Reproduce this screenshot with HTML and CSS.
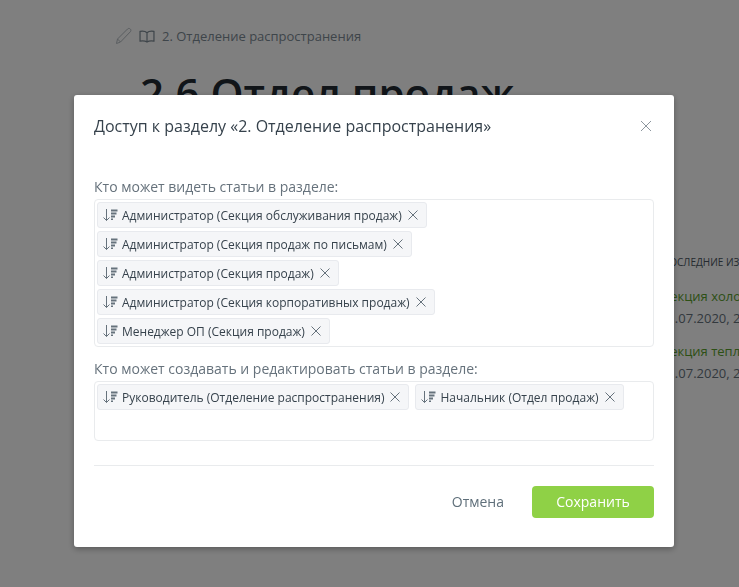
FILE: index.html
```html
<!DOCTYPE html>
<html lang="en">
<head>
    <meta charset="UTF-8">
    <title>Доступ к разделу</title>
    <link rel="stylesheet" href="styles.css">
</head>
<body>
    <div class="page">
        <main class="article">
            <div class="crumbs">
                <svg class="pencil" width="18" height="18" viewBox="0 0 18 18"><path d="M1.500 16.500l1-4.500L12.500 2c.8-.8 2-.8 2.800 0s.8 2 0 2.800L5.500 15z M2.500 12l3 3" fill="none" stroke="currentColor"/></svg>
                <svg class="book" width="16" height="13" viewBox="0 0 17 14"><path d="M8.500 3C7 1.500 4 1 1 1.500V12c3-.5 6 0 7.500 1 1.500-1 4.500-1.500 7.500-1V1.500C13 1 10 1.500 8.500 3zM8.500 3v10" fill="none" stroke="currentColor" stroke-width="1.300"/></svg>
                <span>2. Отделение распространения</span>
            </div>
            <h1>2.6 Отдел продаж</h1>
        </main>
        <aside class="recent">
            <div class="recent-title">ПОСЛЕДНИЕ ИЗМЕНЕНИЯ</div>
            <div class="recent-item">
                <div class="recent-link">Секция холодных продаж</div>
                <div class="recent-date">01.07.2020, 20:15</div>
            </div>
            <div class="recent-item">
                <div class="recent-link">Секция теплых продаж</div>
                <div class="recent-date">01.07.2020, 20:10</div>
            </div>
        </aside>
    </div>

    <div class="overlay">
        <div class="modal">
            <div class="modal-head">
                <h2>Доступ к разделу «2. Отделение распространения»</h2>
                <svg class="close" width="12" height="12" viewBox="0 0 12 12"><path d="M1 1l10 10M11 1L1 11" stroke="currentColor" fill="none"/></svg>
            </div>

            <div class="field">
                <label>Кто может видеть статьи в разделе:</label>
                <div class="tags tags-view">
                    <div class="tag"><svg class="sort" width="16" height="14" viewBox="0 0 16 14"><path d="M4.500 1v11.500M1.500 9.500l3 3 3-3" fill="none" stroke="currentColor"/><path d="M9 1.500h6.500v2H9zM9 4.500h5.500v2H9zM9 7.500h4v2H9zM9 10.500h2V12H9z" fill="currentColor"/></svg><span>Администратор (Секция обслуживания продаж)</span><svg class="remove" width="10" height="10" viewBox="0 0 10 10"><path d="M.5.500l9 9M9.500.500l-9 9" stroke="currentColor" fill="none"/></svg></div>
                    <div class="tag"><svg class="sort" width="16" height="14" viewBox="0 0 16 14"><path d="M4.500 1v11.500M1.500 9.500l3 3 3-3" fill="none" stroke="currentColor"/><path d="M9 1.500h6.500v2H9zM9 4.500h5.500v2H9zM9 7.500h4v2H9zM9 10.500h2V12H9z" fill="currentColor"/></svg><span>Администратор (Секция продаж по письмам)</span><svg class="remove" width="10" height="10" viewBox="0 0 10 10"><path d="M.5.500l9 9M9.500.500l-9 9" stroke="currentColor" fill="none"/></svg></div>
                    <div class="tag"><svg class="sort" width="16" height="14" viewBox="0 0 16 14"><path d="M4.500 1v11.500M1.500 9.500l3 3 3-3" fill="none" stroke="currentColor"/><path d="M9 1.500h6.500v2H9zM9 4.500h5.500v2H9zM9 7.500h4v2H9zM9 10.500h2V12H9z" fill="currentColor"/></svg><span>Администратор (Секция продаж)</span><svg class="remove" width="10" height="10" viewBox="0 0 10 10"><path d="M.5.500l9 9M9.500.500l-9 9" stroke="currentColor" fill="none"/></svg></div>
                    <div class="tag"><svg class="sort" width="16" height="14" viewBox="0 0 16 14"><path d="M4.500 1v11.500M1.500 9.500l3 3 3-3" fill="none" stroke="currentColor"/><path d="M9 1.500h6.500v2H9zM9 4.500h5.500v2H9zM9 7.500h4v2H9zM9 10.500h2V12H9z" fill="currentColor"/></svg><span>Администратор (Секция корпоративных продаж)</span><svg class="remove" width="10" height="10" viewBox="0 0 10 10"><path d="M.5.500l9 9M9.500.500l-9 9" stroke="currentColor" fill="none"/></svg></div>
                    <div class="tag"><svg class="sort" width="16" height="14" viewBox="0 0 16 14"><path d="M4.500 1v11.500M1.500 9.500l3 3 3-3" fill="none" stroke="currentColor"/><path d="M9 1.500h6.500v2H9zM9 4.500h5.500v2H9zM9 7.500h4v2H9zM9 10.500h2V12H9z" fill="currentColor"/></svg><span>Менеджер ОП (Секция продаж)</span><svg class="remove" width="10" height="10" viewBox="0 0 10 10"><path d="M.5.500l9 9M9.500.500l-9 9" stroke="currentColor" fill="none"/></svg></div>
                </div>
            </div>

            <div class="field">
                <label>Кто может создавать и редактировать статьи в разделе:</label>
                <div class="tags tags-edit">
                    <div class="tag"><svg class="sort" width="16" height="14" viewBox="0 0 16 14"><path d="M4.500 1v11.500M1.500 9.500l3 3 3-3" fill="none" stroke="currentColor"/><path d="M9 1.500h6.500v2H9zM9 4.500h5.500v2H9zM9 7.500h4v2H9zM9 10.500h2V12H9z" fill="currentColor"/></svg><span>Руководитель (Отделение распространения)</span><svg class="remove" width="10" height="10" viewBox="0 0 10 10"><path d="M.5.500l9 9M9.500.500l-9 9" stroke="currentColor" fill="none"/></svg></div>
                    <div class="tag"><svg class="sort" width="16" height="14" viewBox="0 0 16 14"><path d="M4.500 1v11.500M1.500 9.500l3 3 3-3" fill="none" stroke="currentColor"/><path d="M9 1.500h6.500v2H9zM9 4.500h5.500v2H9zM9 7.500h4v2H9zM9 10.500h2V12H9z" fill="currentColor"/></svg><span>Начальник (Отдел продаж)</span><svg class="remove" width="10" height="10" viewBox="0 0 10 10"><path d="M.5.500l9 9M9.500.500l-9 9" stroke="currentColor" fill="none"/></svg></div>
                </div>
            </div>

            <div class="modal-foot">
                <button class="btn-cancel" type="button">Отмена</button>
                <button class="btn-save" type="button">Сохранить</button>
            </div>
        </div>
    </div>
</body>
</html>
```

FILE: styles.css
```css
html, body {
    height: 100%;
}
body {
    margin: 0;
    overflow: hidden;
    background-color: #fff;
    font-family: "Open Sans", "Noto Sans", sans-serif;
    color: #2f3b45;
}
.page {
    display: flex;
    height: 100%;
    box-sizing: border-box;
    padding-top: 26px;
}
.article {
    width: 660px;
    flex: none;
    box-sizing: border-box;
    padding-left: 115px;
}
.crumbs {
    display: flex;
    align-items: center;
    gap: 6px;
    height: 20px;
    font-size: 13px;
    color: #7d8a94;
}
.pencil {
    color: #b4bbc1;
}
.book {
    color: #7d8a94;
    margin-right: 1px;
}
h1 {
    margin: 20px 0 0 25px;
    font-size: 42px;
    line-height: 54px;
    font-weight: 600;
    white-space: nowrap;
    color: #222b33;
}
.recent {
    flex: none;
    width: 200px;
    padding-top: 227px;
    white-space: nowrap;
}
.recent-title {
    font-size: 10px;
    line-height: 18px;
    color: #4a5560;
    margin-left: 2px;
    margin-bottom: 14px;
}
.recent-item {
    font-size: 13px;
    line-height: 22px;
    padding-bottom: 5px;
    margin-bottom: 6px;
}
.recent-item:first-of-type {
    border-bottom: 1px solid #e4e6e8;
}
.recent-link {
    color: #5aa02c;
    padding-left: 2px;
}
.recent-date {
    color: #66727c;
}

.overlay {
    position: fixed;
    top: 0;
    left: 0;
    right: 0;
    bottom: 0;
    background: rgba(0,0,0,0.5);
}
.modal {
    width: 600px;
    height: 452px;
    box-sizing: border-box;
    margin: 95px 0 0 74px;
    padding: 0 20px;
    background: #fff;
    border-radius: 3px;
    box-shadow: 0 2px 6px rgba(0,0,0,0.3);
}
.modal-head {
    display: flex;
    align-items: center;
    justify-content: space-between;
    height: 62px;
    margin-bottom: 20px;
}
h2 {
    margin: 0;
    font-size: 16px;
    font-weight: 400;
    color: #36424c;
}
.close {
    color: #8d979f;
    margin-right: 2px;
}
.field {
    margin-bottom: 12px;
}
label {
    display: block;
    font-size: 14px;
    line-height: 20px;
    color: #66727c;
    margin-bottom: 2px;
}
.tags {
    display: flex;
    flex-wrap: wrap;
    align-content: flex-start;
    align-items: flex-start;
    gap: 3px 6px;
    box-sizing: border-box;
    padding: 2px;
    border: 1px solid #e9ebed;
    border-radius: 4px;
}
.tags-view {
    height: 148px;
}
.tags-edit {
    height: 60px;
}
.tag {
    display: flex;
    align-items: center;
    height: 26px;
    box-sizing: border-box;
    padding: 0 8px 0 4px;
    background: #f5f6f8;
    border: 1px solid #e8eaee;
    border-radius: 3px;
    font-size: 12px;
    color: #36424c;
    white-space: nowrap;
}
.sort {
    color: #66727c;
    margin-right: 4px;
}
.remove {
    color: #66727c;
    margin-left: 6px;
}
.modal-foot {
    display: flex;
    justify-content: flex-end;
    align-items: center;
    gap: 28px;
    margin-top: 24px;
    padding-top: 20px;
    border-top: 1px solid #e9ebed;
}
button {
    border: none;
    background: none;
    padding: 0 0 2px;
    font-family: inherit;
    font-size: 14px;
    cursor: pointer;
}
.btn-cancel {
    color: #5f6f7a;
}
.btn-save {
    width: 122px;
    height: 32px;
    background-color: #8fd146;
    color: #fff;
    border-radius: 4px;
}
```
